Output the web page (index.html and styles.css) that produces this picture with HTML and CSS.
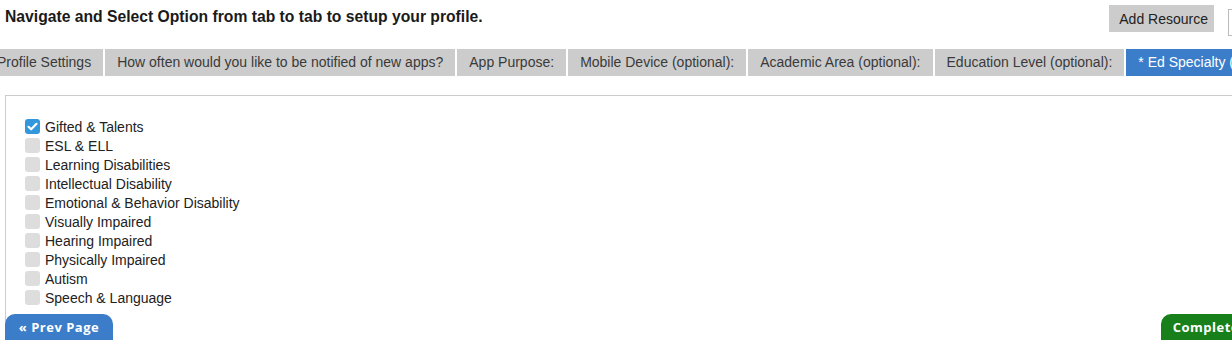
FILE: index.html
```html
<!DOCTYPE html>
<html lang="en">
<head>
    <meta charset="UTF-8">
    <title>Setup Profile</title>
    <link rel="stylesheet" href="styles.css">
</head>
<body>

<div class="header">
    <h1 class="title">Navigate and Select Option from tab to tab to setup your profile.</h1>
    <div class="actions">
        <button class="btn-gray">Add Resource</button>
        <button class="btn-edge"></button>
    </div>
</div>

<div class="tabs">
    <div class="tab">Profile Settings</div>
    <div class="tab">How often would you like to be notified of new apps?</div>
    <div class="tab">App Purpose:</div>
    <div class="tab">Mobile Device (optional):</div>
    <div class="tab">Academic Area (optional):</div>
    <div class="tab">Education Level (optional):</div>
    <div class="tab active">* Ed Specialty (optional):</div>
</div>

<div class="panel">
    <ul class="options">
        <li><span class="check checked"><svg viewBox="0 0 15 15" width="15" height="15"><path d="M3.5 7.8 L6.2 10.3 L11.5 4.8" fill="none" stroke="#fff" stroke-width="2.2" stroke-linecap="round" stroke-linejoin="round"/></svg></span>Gifted &amp; Talents</li>
        <li><span class="check"></span>ESL &amp; ELL</li>
        <li><span class="check"></span>Learning Disabilities</li>
        <li><span class="check"></span>Intellectual Disability</li>
        <li><span class="check"></span>Emotional &amp; Behavior Disability</li>
        <li><span class="check"></span>Visually Impaired</li>
        <li><span class="check"></span>Hearing Impaired</li>
        <li><span class="check"></span>Physically Impaired</li>
        <li><span class="check"></span>Autism</li>
        <li><span class="check"></span>Speech &amp; Language</li>
    </ul>

    <div class="footer">
        <button class="btn-prev">&laquo; Prev Page</button>
        <button class="btn-complete">Complete</button>
    </div>
</div>

</body>
</html>
```

FILE: styles.css
```css
body {
    font-family: 'Liberation Sans', Arial, sans-serif;
    margin: 0;
    padding: 0;
    overflow: hidden;
    background-color: #ffffff;
    color: #222222;
}
.header {
    display: flex;
    justify-content: space-between;
    align-items: flex-start;
    padding: 5px 0 0 5px;
    height: 44px;
}
.title {
    font-size: 15.7px;
    font-weight: bold;
    margin: 3px 0 0 0;
    color: #1a1a1a;
}
.actions {
    display: flex;
    gap: 14px;
    margin-right: -12px;
}
.btn-gray {
    font-family: 'Liberation Sans', Arial, sans-serif;
    font-size: 14px;
    color: #222;
    background-color: #cccccc;
    border: none;
    height: 27px;
    padding: 0 6px 0 10px;
}
.btn-edge {
    width: 16px;
    height: 27px;
    margin-top: 4px;
    background: #fff;
    border: 1px solid #bbb;
}
.tabs {
    display: flex;
    gap: 2px;
    margin-left: -15px;
    white-space: nowrap;
}
.tab {
    background-color: #cccccc;
    color: #3a3a3a;
    font-size: 14px;
    height: 27px;
    line-height: 27px;
    padding: 0 12px;
    flex-shrink: 0;
}
.tab.active {
    background-color: #3b7dc9;
    color: #ffffff;
}
.panel {
    margin: 19px 0 0 5px;
    border-top: 1px solid #cccccc;
    border-left: 1px solid #cccccc;
    padding-top: 21px;
}
.options {
    list-style: none;
    margin: 0;
    padding: 0 0 0 19px;
}
.options li {
    display: flex;
    align-items: center;
    height: 19px;
    font-size: 14px;
    color: #222222;
}
.check {
    display: inline-block;
    width: 15px;
    height: 15px;
    border-radius: 3px;
    background-color: #dddddd;
    margin-right: 5px;
}
.check.checked {
    background-color: #3497db;
}
.check svg {
    display: block;
}
.footer {
    display: flex;
    justify-content: space-between;
    margin: 7px -19px 0 -1px;
}
.btn-prev, .btn-complete {
    font-family: 'Open Sans', sans-serif;
    font-weight: bold;
    font-size: 13px;
    letter-spacing: 0.5px;
    color: #ffffff;
    border: none;
    height: 30px;
    padding: 0 12px 4px 12px;
    border-radius: 10px 10px 0 0;
}
.btn-prev {
    background-color: #3b7dc9;
    width: 108px;
}
.btn-complete {
    background-color: #17801a;
    border-radius: 10px 0 0 0;
}
```
